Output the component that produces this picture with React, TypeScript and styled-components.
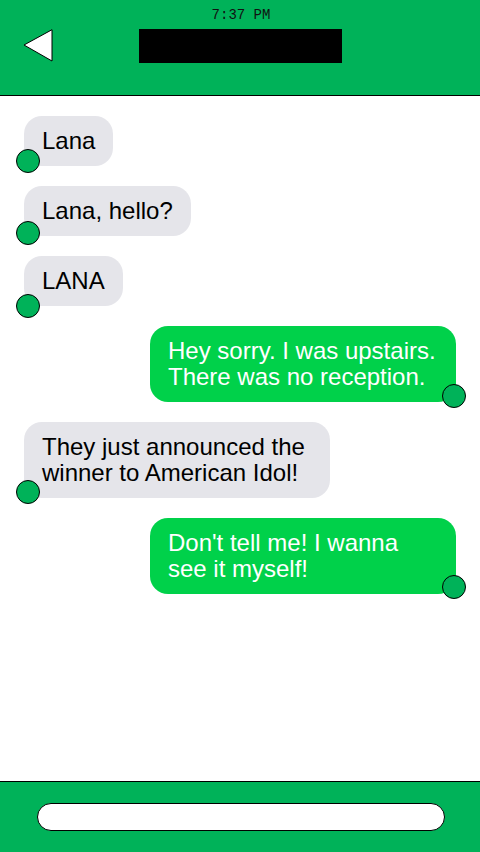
import React from "react";
import styled, { createGlobalStyle } from "styled-components";

type Message = {
  text: string;
  mine: boolean;
  dotLift: number;
};

const MESSAGES: Message[] = [
  { text: "Lana", mine: false, dotLift: 5 },
  { text: "Lana, hello?", mine: false, dotLift: 3 },
  { text: "LANA", mine: false, dotLift: 0 },
  { text: "Hey sorry. I was upstairs. There was no reception.", mine: true, dotLift: 6 },
  { text: "They just announced the winner to American Idol!", mine: false, dotLift: 6 },
  { text: "Don't tell me! I wanna see it myself!", mine: true, dotLift: 7 },
];

const App = () => {
  return (
    <>
      <GlobalStyle />
      <Screen>
        <Header>
          <Clock>7:37 PM</Clock>
          <TitleRow>
            <BackButton type="button" aria-label="Back">
              <svg width="30" height="33" viewBox="0 0 30 33">
                <polygon points="1,16 29,0.7 29,32" fill="#fff" stroke="#000" strokeWidth="1" />
              </svg>
            </BackButton>
            <ContactName />
          </TitleRow>
        </Header>

        <Thread>
          {MESSAGES.map((msg, i) => (
            <Bubble key={`msg_${i}`} $mine={msg.mine}>
              {msg.text}
              <Dot $mine={msg.mine} $lift={msg.dotLift} />
            </Bubble>
          ))}
        </Thread>

        <Footer>
          <Input type="text" aria-label="Message" />
        </Footer>
      </Screen>
    </>
  );
};

const GlobalStyle = createGlobalStyle`
  html, body {
    margin: 0;
    padding: 0;
    background: #fff;
  }
  * {
    box-sizing: border-box;
  }
`;

const Screen = styled.div`
  width: 480px;
  height: 852px;
  display: flex;
  flex-direction: column;
  overflow: hidden;
  font-family: "Liberation Sans", Arial, sans-serif;
`;

const Header = styled.header`
  height: 96px;
  flex-shrink: 0;
  background: #00b259;
  border-bottom: 1px solid #000;
  display: flex;
  flex-direction: column;
  padding-top: 7px;
`;

const Clock = styled.div`
  font-family: "Liberation Mono", "Courier New", monospace;
  font-size: 14px;
  line-height: 16px;
  color: #111;
  text-align: center;
  padding-left: 2px;
`;

const TitleRow = styled.div`
  margin-top: 6px;
  display: grid;
  grid-template-columns: 1fr auto 1fr;
  align-items: start;
`;

const BackButton = styled.button`
  justify-self: start;
  margin-left: 23px;
  padding: 0;
  border: 0;
  background: none;
  display: flex;
`;

const ContactName = styled.div`
  width: 203px;
  height: 34px;
  margin-left: 1px;
  background: #000;
`;

const Thread = styled.main`
  flex: 1;
  display: flex;
  flex-direction: column;
  gap: 20px;
  padding: 20px 24px 0;
`;

const Bubble = styled.div<{ $mine: boolean }>`
  position: relative;
  align-self: ${(p) => (p.$mine ? "flex-end" : "flex-start")};
  max-width: 306px;
  padding: 12px 18px;
  border-radius: 18px;
  font-size: 24px;
  line-height: 26px;
  color: ${(p) => (p.$mine ? "#fff" : "#000")};
  background: ${(p) => (p.$mine ? "#00d14a" : "#e5e5ea")};
`;

const Dot = styled.span<{ $mine: boolean; $lift: number }>`
  position: absolute;
  width: 24px;
  height: 24px;
  border-radius: 50%;
  background: #00b259;
  border: 1px solid #000;
  bottom: ${(p) => p.$lift - 12}px;
  ${(p) => (p.$mine ? "right: -10px;" : "left: -8px;")}
`;

const Footer = styled.footer`
  height: 71px;
  flex-shrink: 0;
  background: #00b259;
  border-top: 1px solid #000;
  padding: 21px 35px 0 37px;
`;

const Input = styled.input`
  display: block;
  width: 100%;
  height: 28px;
  border: 1px solid #000;
  border-radius: 14px;
  background: #fff;
  outline: none;
`;

export default App;
